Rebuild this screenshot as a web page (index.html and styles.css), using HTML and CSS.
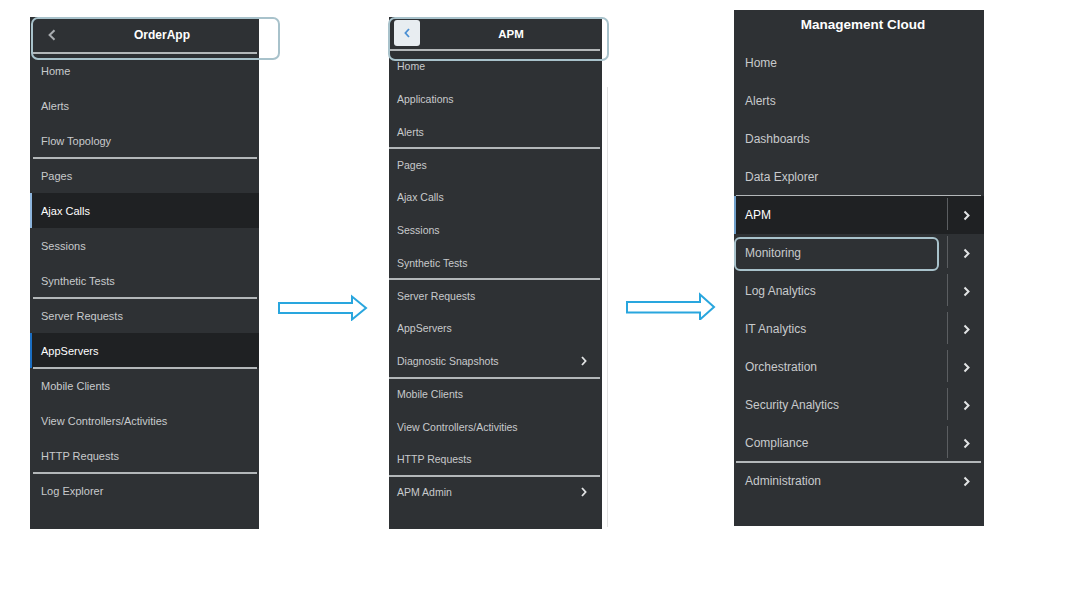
FILE: index.html
```html
<!DOCTYPE html>
<html lang="en">
<head>
    <meta charset="UTF-8">
    <meta name="viewport" content="width=device-width, initial-scale=1.0">
    <title>Navigation Menus</title>
    <link rel="stylesheet" href="styles.css">
</head>
<body>
    <div class="page">

        <!-- step 1: application menu -->
        <div class="shot shotOrder">
            <div class="panel orderPanel">
                <div class="orderHead">
                    <span class="backIcon">
                        <svg width="8" height="12" viewBox="0 0 8 12"><path d="M6.5 1.2L1.6 6l4.9 4.8" fill="none" stroke="#a9adb0" stroke-width="2"/></svg>
                    </span>
                    <span class="title">OrderApp</span>
                </div>
                <div class="sep"></div>
                <div class="item">Home</div>
                <div class="item">Alerts</div>
                <div class="item">Flow Topology</div>
                <div class="sep"></div>
                <div class="item">Pages</div>
                <div class="item active">Ajax Calls</div>
                <div class="item">Sessions</div>
                <div class="item">Synthetic Tests</div>
                <div class="sep"></div>
                <div class="item">Server Requests</div>
                <div class="item active deep">AppServers</div>
                <div class="sep"></div>
                <div class="item">Mobile Clients</div>
                <div class="item">View Controllers/Activities</div>
                <div class="item">HTTP Requests</div>
                <div class="sep"></div>
                <div class="item">Log Explorer</div>
            </div>
            <div class="ring orderRing"></div>
        </div>

        <div class="arrow">
            <svg width="90" height="28" viewBox="0 0 90 28"><polygon points="1,10 74,10 74,3.5 88,15 74,26.5 74,20 1,20" fill="#fff" stroke="#29a6de" stroke-width="2"/></svg>
        </div>

        <!-- step 2: APM menu -->
        <div class="shot shotApm">
            <div class="panel apmPanel">
                <div class="apmHead">
                    <span class="backBtn">
                        <svg width="6" height="10" viewBox="0 0 6 10"><path d="M5 1L1.4 5 5 9" fill="none" stroke="#4a8fd3" stroke-width="1.8"/></svg>
                    </span>
                    <span class="title">APM</span>
                </div>
                <div class="sep"></div>
                <div class="item">Home</div>
                <div class="item">Applications</div>
                <div class="item">Alerts</div>
                <div class="sep"></div>
                <div class="item">Pages</div>
                <div class="item">Ajax Calls</div>
                <div class="item">Sessions</div>
                <div class="item">Synthetic Tests</div>
                <div class="sep"></div>
                <div class="item">Server Requests</div>
                <div class="item">AppServers</div>
                <div class="item">Diagnostic Snapshots
                    <svg width="6" height="10" viewBox="0 0 6 10"><path d="M1 1l3.6 4L1 9" fill="none" stroke="#e2e4e5" stroke-width="1.8"/></svg>
                </div>
                <div class="sep"></div>
                <div class="item">Mobile Clients</div>
                <div class="item">View Controllers/Activities</div>
                <div class="item">HTTP Requests</div>
                <div class="sep"></div>
                <div class="item">APM Admin
                    <svg width="6" height="10" viewBox="0 0 6 10"><path d="M1 1l3.6 4L1 9" fill="none" stroke="#e2e4e5" stroke-width="1.8"/></svg>
                </div>
            </div>
            <div class="edge"></div>
            <div class="ring apmRing"></div>
        </div>

        <div class="arrow arrowTwo">
            <svg width="90" height="28" viewBox="0 0 90 28"><polygon points="1,10 74,10 74,2.5 88,15 74,27.5 74,20.5 1,20.5" fill="#fff" stroke="#29a6de" stroke-width="2"/></svg>
        </div>

        <!-- step 3: top level menu -->
        <div class="shot shotCloud">
            <div class="panel cloudPanel">
                <div class="cloudHead">Management Cloud</div>
                <div class="item"><span class="label">Home</span></div>
                <div class="item"><span class="label">Alerts</span></div>
                <div class="item"><span class="label">Dashboards</span></div>
                <div class="item"><span class="label">Data Explorer</span></div>
                <div class="sep"></div>
                <div class="item active">
                    <span class="label">APM</span>
                    <span class="divider"></span>
                    <span class="more"><svg width="7" height="11" viewBox="0 0 7 11"><path d="M1.5 1.5l4 4-4 4" fill="none" stroke="#e2e4e5" stroke-width="2"/></svg></span>
                </div>
                <div class="item">
                    <span class="label">Monitoring</span>
                    <span class="divider"></span>
                    <span class="more"><svg width="7" height="11" viewBox="0 0 7 11"><path d="M1.5 1.5l4 4-4 4" fill="none" stroke="#e2e4e5" stroke-width="2"/></svg></span>
                    <span class="ring monitorRing"></span>
                </div>
                <div class="item">
                    <span class="label">Log Analytics</span>
                    <span class="divider"></span>
                    <span class="more"><svg width="7" height="11" viewBox="0 0 7 11"><path d="M1.5 1.5l4 4-4 4" fill="none" stroke="#e2e4e5" stroke-width="2"/></svg></span>
                </div>
                <div class="item">
                    <span class="label">IT Analytics</span>
                    <span class="divider"></span>
                    <span class="more"><svg width="7" height="11" viewBox="0 0 7 11"><path d="M1.5 1.5l4 4-4 4" fill="none" stroke="#e2e4e5" stroke-width="2"/></svg></span>
                </div>
                <div class="item">
                    <span class="label">Orchestration</span>
                    <span class="divider"></span>
                    <span class="more"><svg width="7" height="11" viewBox="0 0 7 11"><path d="M1.5 1.5l4 4-4 4" fill="none" stroke="#e2e4e5" stroke-width="2"/></svg></span>
                </div>
                <div class="item">
                    <span class="label">Security Analytics</span>
                    <span class="divider"></span>
                    <span class="more"><svg width="7" height="11" viewBox="0 0 7 11"><path d="M1.5 1.5l4 4-4 4" fill="none" stroke="#e2e4e5" stroke-width="2"/></svg></span>
                </div>
                <div class="item">
                    <span class="label">Compliance</span>
                    <span class="divider"></span>
                    <span class="more"><svg width="7" height="11" viewBox="0 0 7 11"><path d="M1.5 1.5l4 4-4 4" fill="none" stroke="#e2e4e5" stroke-width="2"/></svg></span>
                </div>
                <div class="sep"></div>
                <div class="item">
                    <span class="label">Administration</span>
                    <span class="divider blank"></span>
                    <span class="more"><svg width="7" height="11" viewBox="0 0 7 11"><path d="M1.5 1.5l4 4-4 4" fill="none" stroke="#e2e4e5" stroke-width="2"/></svg></span>
                </div>
            </div>
        </div>

    </div>
</body>
</html>
```

FILE: styles.css
```css
body {
    margin: 0;
    background-color: #ffffff;
    font-family: "Liberation Sans", Arial, sans-serif;
}

.page {
    display: flex;
    align-items: flex-start;
    padding-left: 30px;
}

.shot {
    position: relative;
}

.panel {
    background-color: #2e3134;
    color: #c8cacc;
}

.title {
    color: #ffffff;
    font-weight: bold;
    text-align: center;
}

.sep {
    position: relative;
    height: 2px;
    background-color: #b3b7b9;
}

.ring {
    position: absolute;
    box-sizing: border-box;
    border: 2px solid #a8c2cb;
    border-radius: 7px;
}

.arrow {
    margin-top: 293px;
}

.arrow svg {
    display: block;
}

/* OrderApp */

.shotOrder {
    width: 248px;
    margin-top: 17px;
}

.orderPanel {
    width: 229px;
    padding-bottom: 21px;
}

.orderHead {
    display: grid;
    grid-template-columns: 35px 1fr;
    align-items: center;
    height: 36px;
}

.orderHead .backIcon {
    display: flex;
    padding-left: 18px;
}

.orderHead .title {
    font-size: 12px;
}

.orderPanel .sep {
    margin: -1px 2px -1px 3px;
}

.orderPanel .item {
    display: flex;
    align-items: center;
    height: 35px;
    padding-left: 11px;
    font-size: 11px;
}

.orderPanel .item.active {
    background-color: #1f2123;
    color: #ffffff;
    border-left: 2px solid #8db5dd;
    padding-left: 9px;
}

.orderPanel .item.deep {
    border-left-color: #1b6ec2;
}

.orderRing {
    left: 1px;
    top: 0;
    width: 249px;
    height: 43px;
}

/* APM */

.shotApm {
    display: flex;
    width: 219px;
    margin: 17px 0 0 21px;
}

.apmPanel {
    width: 213px;
    padding-bottom: 20.5px;
}

.apmHead {
    display: grid;
    grid-template-columns: 31px 1fr;
    align-items: center;
    height: 33px;
}

.backBtn {
    display: flex;
    align-items: center;
    justify-content: center;
    width: 26px;
    height: 26px;
    margin: -2px 0 0 5px;
    background-color: #e8edf1;
    border-radius: 3px;
}

.apmHead .title {
    font-size: 11.5px;
}

.apmPanel .sep {
    margin: -1px 2px -1px 0;
}

.apmPanel .item {
    display: flex;
    align-items: center;
    justify-content: space-between;
    height: 32.75px;
    padding: 0 15px 0 8px;
    font-size: 10.5px;
}

.edge {
    width: 1px;
    height: 440px;
    margin: 70px 0 0 5px;
    background-color: #e2e2e2;
}

.apmRing {
    left: -1px;
    top: 0;
    width: 221px;
    height: 44px;
}

/* Management Cloud */

.arrowTwo {
    margin: 292px 0 0 18px;
}

.shotCloud {
    width: 250px;
    margin: 10px 0 0 18px;
}

.cloudPanel {
    padding-bottom: 26px;
}

.cloudHead {
    height: 34px;
    line-height: 30px;
    padding-left: 8px;
    color: #ffffff;
    font-size: 13.5px;
    font-weight: bold;
    text-align: center;
}

.cloudPanel .sep {
    margin: -1px 3px -1px 2px;
}

.cloudPanel .item {
    position: relative;
    display: flex;
    align-items: center;
    height: 38px;
    font-size: 12px;
}

.cloudPanel .label {
    flex: 1;
    padding-left: 11px;
}

.cloudPanel .item.active {
    background-color: #1f2123;
    color: #ffffff;
    border-left: 2px solid #6f9fc9;
}

.cloudPanel .item.active .label {
    padding-left: 9px;
}

.divider {
    align-self: stretch;
    width: 1px;
    margin: 2px 0 4px;
    background-color: #5b5e61;
}

.divider.blank {
    background-color: transparent;
}

.more {
    display: flex;
    justify-content: center;
    width: 36px;
}

.monitorRing {
    left: 0;
    top: 3px;
    width: 205px;
    height: 34px;
    border-radius: 6px;
}
```
